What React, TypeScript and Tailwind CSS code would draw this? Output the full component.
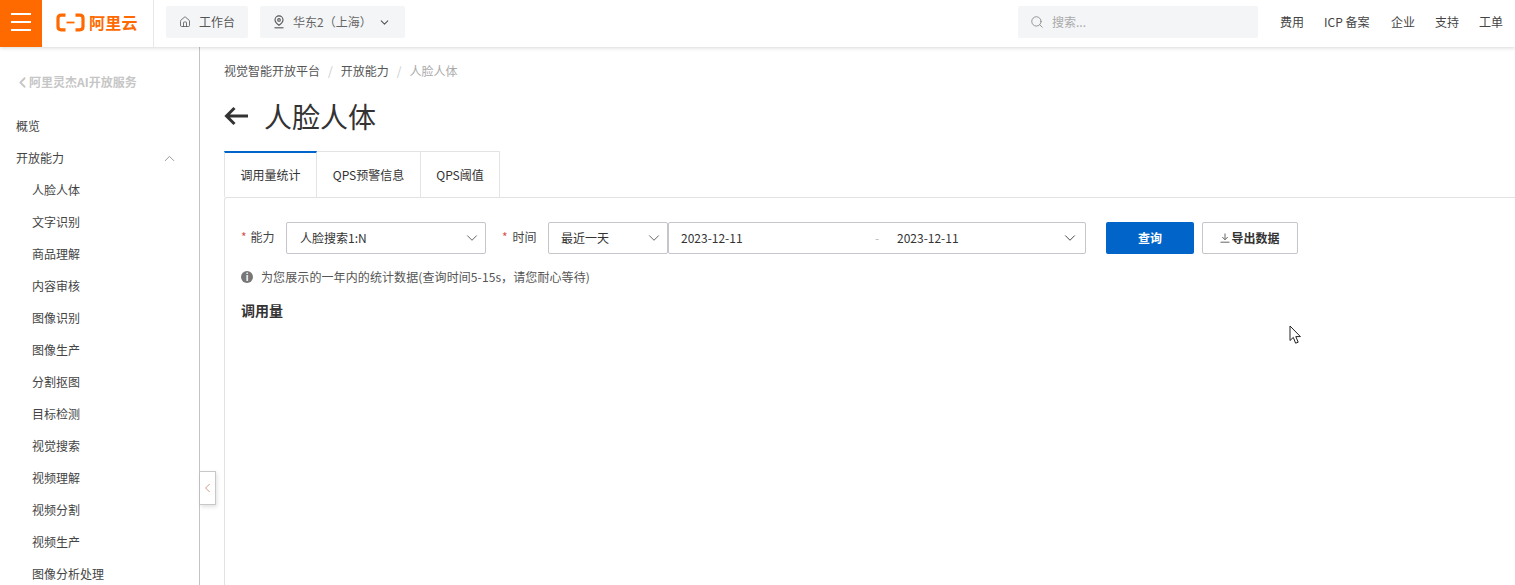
import React from "react";
import { ChevronDown, ChevronLeft, ChevronUp, Home, Search } from "lucide-react";

const items = ["人脸人体", "文字识别", "商品理解", "内容审核", "图像识别", "图像生产", "分割抠图", "目标检测", "视觉搜索", "视频理解", "视频分割", "视频生产", "图像分析处理"];
const font = { fontFamily: '"Noto Sans CJK SC", "Liberation Sans", sans-serif' };

function Logo() {
  return (
    <div className="flex items-center gap-[4px] text-[#ff6a00]">
      <svg width="29" height="19" viewBox="0 0 29 19" fill="none" stroke="#ff6a00">
        <path d="M9.5 2.2H5.2C3.2 2.2 2 3.4 2 5.2v8.6c0 1.8 1.2 3 3.2 3h4.3" strokeWidth="3.2" />
        <path d="M19.5 2.2h4.3c2 0 3.200 1.200 3.200 3v8.600c0 1.800-1.200 3-3.200 3h-4.300" strokeWidth="3.200" />
        <path d="M10.500 9.500h8" strokeWidth="1.800" />
      </svg>
      <span className="text-[16px] leading-none font-bold tracking-[0.3px]">阿里云</span>
    </div>
  );
}

function Pin() {
  return (
    <svg width="12" height="14" viewBox="0 0 12 14" fill="none" stroke="#555" strokeWidth="1.100" className="mr-[8px]">
      <path d="M6 10.300C3.700 8.600 2 6.900 2 4.900a4 4 0 0 1 8 0c0 2-1.700 3.700-4 5.400z" />
      <circle cx="6" cy="4.900" r="1.300" />
      <path d="M1.500 12.800h9" />
    </svg>
  );
}

function Cursor() {
  return (
    <svg className="absolute left-[1289px] top-[325px]" width="13" height="20" viewBox="0 0 13 20">
      <path d="M1 1v14.500l3.300-3.100 2.300 5.800 2.600-1-2.400-5.600h4.600z" fill="#fff" stroke="#222" strokeWidth="1" />
    </svg>
  );
}

export default function App() {
  return (
    <div className="relative flex h-[585px] w-[1515px] flex-col overflow-hidden bg-white text-[12px] text-[#333]" style={font}>
      <header className="relative z-10 flex h-[47px] shrink-0 items-start bg-white shadow-[0_1px_4px_rgba(0,0,0,0.16)]">
        <div className="flex h-full w-[42px] flex-col items-center justify-center gap-[6px] bg-[#ff6a00] pb-[3px]">
          <span className="h-[2px] w-5 bg-white" />
          <span className="h-[2px] w-5 bg-white" />
          <span className="h-[2px] w-5 bg-white" />
        </div>
        <div className="flex h-full w-[112px] items-center border-r border-[#e8e8e8] pb-[3px] pl-[14px]">
          <Logo />
        </div>
        <div className="ml-3 mt-[6px] flex h-8 w-[82px] items-center rounded-[2px] bg-[#f4f5f7] pl-[13px] text-[#555]">
          <Home size={12} strokeWidth={1.600} className="mr-[8px] text-[#555]" />
          工作台
        </div>
        <div className="ml-3 mt-[6px] flex h-8 w-[145px] items-center rounded-[2px] bg-[#f4f5f7] pl-[13px] text-[#666]">
          <Pin />
          华东2（上海）
          <ChevronDown size={13} className="ml-[6px] text-[#555]" />
        </div>
        <div className="ml-[613px] mt-[6px] flex h-8 w-[240px] items-center rounded-[2px] bg-[#f4f5f7] pl-[12px] text-[#aaa]">
          <Search size={14} strokeWidth={1.500} className="mr-[8px] text-[#888]" />
          搜索...
        </div>
        <nav className="ml-[22px] mt-[6px] flex h-8 items-center text-[#444]">
          <span className="w-[24px]">费用</span>
          <span className="ml-[20px] w-[47px]">ICP 备案</span>
          <span className="ml-[20px] w-[24px]">企业</span>
          <span className="ml-[20px] w-[24px]">支持</span>
          <span className="ml-[20px] w-[24px]">工单</span>
        </nav>
      </header>

      <div className="flex min-h-0 flex-1">
        <aside className="relative w-[200px] shrink-0 border-r border-[#c4c4c4] bg-white">
          <div className="mt-[26px] flex h-[18px] items-center pl-[14px] font-bold text-[#c6c6c6]">
            <ChevronLeft size={17} strokeWidth={2.500} className="-mr-[2px] shrink-0" />
            阿里灵杰AI开放服务
          </div>
          <div className="mt-[19px] flex h-8 items-center pl-4 text-[#444]">概览</div>
          <div className="flex h-8 items-center justify-between pl-4 pr-[21px] text-[#444]">
            开放能力
            <ChevronUp size={17} strokeWidth={1.400} className="text-[#999]" />
          </div>
          {items.map((t) => (
            <div key={t} className="flex h-8 items-center pl-8 text-[#444]">{t}</div>
          ))}
          <div className="absolute left-[200px] top-[424px] z-10 flex h-[34px] w-4 items-center justify-center border border-l-0 border-[#c8c8c8] bg-white shadow-[1px_2px_4px_rgba(0,0,0,0.12)]">
            <ChevronLeft size={16} strokeWidth={1.600} className="text-[#d09a8c]" />
          </div>
        </aside>

        <main className="min-w-0 flex-1 pl-6">
          <div className="mt-[15px] flex h-[18px] items-center text-[#555]">
            视觉智能开放平台
            <span className="mx-[8px] text-[#ccc]">/</span>
            开放能力
            <span className="mx-[8px] text-[#ccc]">/</span>
            <span className="text-[#aaa]">人脸人体</span>
          </div>
          <div className="mt-[17px] flex h-[38px] items-center">
            <svg width="25" height="20" viewBox="0 0 25 20" fill="none" stroke="#333" strokeWidth="3">
              <path d="M24 10H2.500M10.500 2 2.500 10l8 8" />
            </svg>
            <h1 className="ml-[15px] text-[28px] leading-none font-normal text-[#333]">人脸人体</h1>
          </div>
          <div className="relative z-[1] mt-[16px] flex h-[46px] text-[#333]">
            <div className="flex w-[93px] items-center justify-center border-x border-[#e4e4e4] border-t-2 border-t-[#0064c8] bg-white text-[#333]">调用量统计</div>
            <div className="flex w-[104px] items-center justify-center border-r border-t border-[#e4e4e4]">QPS预警信息</div>
            <div className="flex w-[79px] items-center justify-center border-r border-t border-[#e4e4e4]">QPS阈值</div>
          </div>
          <section className="h-[400px] rounded-tl-[3px] border-l border-t border-[#e2e2e2] pl-4 pt-6">
            <div className="flex h-8 items-center">
              <span className="w-[45px] -translate-y-[1px] text-[#444]"><span className="text-[#d9534f]">*</span><span className="ml-[4px]">能力</span></span>
              <div className="flex h-8 w-[200px] items-center justify-between rounded-[2px] border border-[#c4c6cc] pl-[13px] pr-[4px]">
                人脸搜索1:N
                <ChevronDown size={18} strokeWidth={1.200} className="text-[#555]" />
              </div>
              <span className="ml-4 w-[46px] -translate-y-[1px] text-[#444]"><span className="text-[#d9534f]">*</span><span className="ml-[5px]">时间</span></span>
              <div className="flex h-8 w-[120px] items-center justify-between rounded-[2px] border border-[#c4c6cc] pl-[12px] pr-[4px]">
                最近一天
                <ChevronDown size={18} strokeWidth={1.200} className="text-[#555]" />
              </div>
              <div className="flex h-8 w-[418px] items-center rounded-[2px] border border-[#c4c6cc] pl-[12px] pr-[6px]">
                <span className="w-[194px]">2023-12-11</span>
                <span className="w-[22px] text-[#bbb]">-</span>
                <span>2023-12-11</span>
                <ChevronDown size={18} strokeWidth={1.300} className="ml-auto text-[#444]" />
              </div>
              <button className="ml-5 flex h-8 w-[88px] items-center justify-center rounded-[2px] bg-[#0064c8] font-bold text-white">查询</button>
              <button className="ml-2 flex h-8 w-[96px] items-center justify-center rounded-[2px] border border-[#c4c6cc] bg-white font-bold text-[#333]">
                <svg width="10" height="10" viewBox="0 0 10 10" fill="none" stroke="#666" strokeWidth="1">
                  <path d="M5 .5v6M2.300 4 5 6.800 7.700 4M.5 9.200h9" />
                </svg>
                <span className="ml-[1px]">导出数据</span>
              </button>
            </div>
            <div className="mt-[14px] flex h-[18px] items-center text-[#555]">
              <span className="mr-[8px] flex h-3 w-3 items-center justify-center rounded-full bg-[#777] text-[9px] leading-none font-bold text-white">i</span>
              <span className="tracking-[0.1px]">为您展示的一年内的统计数据(查询时间5-15s，请您耐心等待)</span>
            </div>
            <h2 className="mt-[15px] text-[14px] leading-[18px] font-bold text-[#333]">调用量</h2>
          </section>
        </main>
      </div>
      <Cursor />
    </div>
  );
}
